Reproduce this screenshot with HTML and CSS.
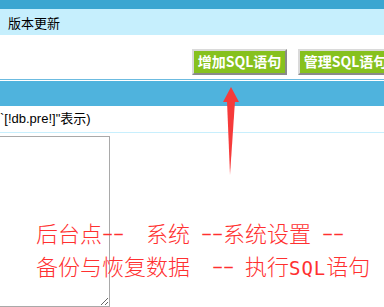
FILE: index.html
```html
<!DOCTYPE html>
<html lang="zh-CN">
<head>
    <meta charset="utf-8">
    <title>版本更新</title>
    <link rel="stylesheet" href="styles.css">
</head>
<body>
    <div class="topbar"></div>
    <div class="title">版本更新</div>
    <div class="toolbar">
        <a class="btn" href="#">增加SQL语句</a>
        <a class="btn" href="#">管理SQL语句</a>
    </div>
    <div class="rule"></div>
    <div class="section-bar"></div>
    <div class="note">`[!db.pre!]"表示)</div>
    <div class="editor">
        <textarea class="sql-box"></textarea>
    </div>

    <div class="annotation">
        <div class="line">后台点<span class="ascii"><span class="dash">-</span><span class="dash">-</span>  </span>系统<span class="ascii"> <span class="dash">-</span><span class="dash">-</span></span>系统设置<span class="ascii"> <span class="dash">-</span><span class="dash">-</span></span></div>
        <div class="line">备份与恢复数据<span class="ascii">  <span class="dash">-</span><span class="dash">-</span> </span>执行<span class="ascii sql">SQL</span>语句</div>
    </div>

    <svg class="arrow" width="384" height="307" viewBox="0 0 384 307">
        <polygon points="231,87 239,102 223,102" fill="#f63b3b"/>
        <polygon points="227,101 235,101 230,175" fill="#f63b3b"/>
    </svg>
</body>
</html>
```

FILE: styles.css
```css
body {
    margin: 0;
    width: 384px;
    height: 307px;
    overflow: hidden;
    position: relative;
    font-family: "Liberation Sans", "Noto Sans CJK SC", sans-serif;
    font-size: 13px;
    color: #000;
    background: #fff;
}
.topbar {
    height: 9px;
    background-color: #3ba6d1;
}
.title {
    height: 26px;
    line-height: 27px;
    padding-left: 8px;
    background-color: #c6effd;
    font-family: "Noto Sans CJK SC", sans-serif;
    font-size: 13px;
}
.toolbar {
    display: flex;
    gap: 11px;
    height: 44px;
    box-sizing: border-box;
    padding: 14px 0 0 192px;
    white-space: nowrap;
}
.btn {
    display: block;
    flex: none;
    width: 95px;
    height: 26px;
    box-sizing: border-box;
    border: 2px solid;
    border-color: #dadada #8a8a8a #8a8a8a #dadada;
    background-color: #86c11e;
    color: #fff;
    font-family: "Noto Sans CJK SC", sans-serif;
    font-weight: bold;
    font-size: 14px;
    line-height: 21px;
    text-align: center;
    text-decoration: none;
}
.rule {
    height: 1px;
    margin-bottom: 1px;
    background-color: #6cbbe0;
}
.section-bar {
    height: 25px;
    background-color: #4fb3dd;
}
.note {
    height: 26px;
    line-height: 26px;
    border-bottom: 1px solid #c8effd;
    white-space: nowrap;
}
.editor {
    padding-top: 3px;
}
.sql-box {
    display: block;
    width: 120px;
    height: 171px;
    margin: 0 0 0 -10px;
    box-sizing: border-box;
    border: 1px solid #a9a9a9;
    resize: both;
}
.annotation {
    position: absolute;
    left: 36px;
    top: 218px;
    font-family: "Noto Sans CJK SC", sans-serif;
    font-weight: 300;
    font-size: 22px;
    line-height: 28px;
    color: #ff3030;
}
.line {
    white-space: pre;
}
.ascii {
    font-family: "Liberation Mono", monospace;
    font-size: 18.3px;
}
.dash {
    display: inline-block;
    transform: translateY(-2px) scaleX(1.7);
}
.sql {
    font-family: "DejaVu Sans Mono", monospace;
    font-size: 19px;
    letter-spacing: 1px;
}
.arrow {
    position: absolute;
    left: 0;
    top: 0;
}
```
